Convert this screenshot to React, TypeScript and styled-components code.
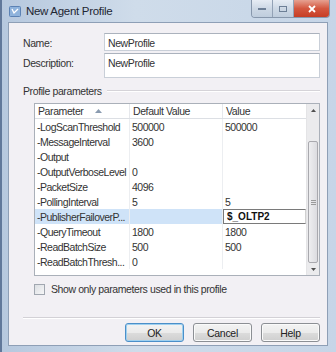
import React from 'react';
import styled, { createGlobalStyle } from 'styled-components';

const GlobalStyle = createGlobalStyle`
  html, body {
    margin: 0;
    padding: 0;
    background: #6f86a2;
  }
  body {
    font-family: "Liberation Sans", Arial, sans-serif;
    font-size: 10.5px;
    color: #333333;
  }
`;

interface Param {
  name: string;
  def: string;
  value: string;
  editing?: boolean;
}

const params: Param[] = [
  { name: '-LogScanThreshold', def: '500000', value: '500000' },
  { name: '-MessageInterval', def: '3600', value: '' },
  { name: '-Output', def: '', value: '' },
  { name: '-OutputVerboseLevel', def: '0', value: '' },
  { name: '-PacketSize', def: '4096', value: '' },
  { name: '-PollingInterval', def: '5', value: '5' },
  { name: '-PublisherFailoverP...', def: '', value: '$_OLTP2', editing: true },
  { name: '-QueryTimeout', def: '1800', value: '1800' },
  { name: '-ReadBatchSize', def: '500', value: '500' },
  { name: '-ReadBatchThresh...', def: '0', value: '' },
];

const App = () => {
  return (
    <>
      <GlobalStyle />
      <Window>
        <TitleBar>
          <AppIcon>
            <svg width="12" height="11" viewBox="0 0 12 11">
              <rect x="0.5" y="0.5" width="11" height="10" rx="1" fill="#8fb3dc" stroke="#5c82b4" />
              <path d="M3 3 L5 7 L9 3" stroke="#ffffff" strokeWidth="1.3" fill="none" />
            </svg>
          </AppIcon>
          <Title>New Agent Profile</Title>
          <Controls>
            <CtlButton>
              <svg width="10" height="6" viewBox="0 0 10 6">
                <rect x="1" y="2" width="8" height="2" fill="#6d7f96" />
              </svg>
            </CtlButton>
            <CtlButton>
              <svg width="10" height="8" viewBox="0 0 10 8">
                <rect x="1.5" y="1.5" width="7" height="5" fill="none" stroke="#6d7f96" />
                <rect x="3" y="3" width="4" height="2" fill="#cbd6e3" />
              </svg>
            </CtlButton>
            <CloseButton>
              <svg width="10" height="8" viewBox="0 0 10 8">
                <path d="M2 1 L8 7 M8 1 L2 7" stroke="#ffffff" strokeWidth="1.8" />
              </svg>
            </CloseButton>
          </Controls>
        </TitleBar>
        <Client>
          <FieldRow>
            <Label>Name:</Label>
            <TextBox $height={18}>NewProfile</TextBox>
          </FieldRow>
          <FieldRow>
            <Label>Description:</Label>
            <TextBox $height={25}>NewProfile</TextBox>
          </FieldRow>
          <GroupHeader>
            <span>Profile parameters</span>
            <GroupLine />
          </GroupHeader>
          <Grid>
            <GridBody>
              <HeaderRow>
                <HeadCell>
                  Parameter
                  <SortArrow>
                    <svg width="7" height="4" viewBox="0 0 7 4">
                      <path d="M0 4 L3.5 0 L7 4 Z" fill="#8a9bb0" />
                    </svg>
                  </SortArrow>
                </HeadCell>
                <HeadCell>Default Value</HeadCell>
                <HeadCell>Value</HeadCell>
              </HeaderRow>
              {params.map((p) => (
                <Row key={p.name}>
                  <Cell $selected={p.editing}>{p.name}</Cell>
                  <Cell $selected={p.editing}>{p.def}</Cell>
                  {p.editing ? <EditCell>{p.value}</EditCell> : <Cell>{p.value}</Cell>}
                </Row>
              ))}
            </GridBody>
            <ScrollBar>
              <ScrollArrow>
                <svg width="5" height="3" viewBox="0 0 5 3">
                  <path d="M0 3 L2.5 0 L5 3 Z" fill="#4f4f4f" />
                </svg>
              </ScrollArrow>
              <Track>
                <Thumb>
                  <svg width="5" height="5" viewBox="0 0 5 5">
                    <path d="M0 0.5 H5 M0 2.5 H5 M0 4.5 H5" stroke="#9a9a9a" />
                  </svg>
                </Thumb>
              </Track>
              <ScrollArrow>
                <svg width="5" height="3" viewBox="0 0 5 3">
                  <path d="M0 0 L2.5 3 L5 0 Z" fill="#4f4f4f" />
                </svg>
              </ScrollArrow>
            </ScrollBar>
          </Grid>
          <CheckRow>
            <CheckBox />
            <span>Show only parameters used in this profile</span>
          </CheckRow>
          <Separator />
          <ButtonRow>
            <DialogButton $default>OK</DialogButton>
            <DialogButton>Cancel</DialogButton>
            <DialogButton>Help</DialogButton>
          </ButtonRow>
        </Client>
      </Window>
    </>
  );
};

export default App;

const Window = styled.div`
  width: 336px;
  height: 352px;
  box-sizing: border-box;
  display: flex;
  flex-direction: column;
  background: linear-gradient(90deg, #b6c8de 0%, #cfdcea 40%, #c6d5e7 100%);
  border-left: 2px solid #61789a;
  overflow: hidden;
`;

const TitleBar = styled.div`
  height: 22px;
  flex: none;
  display: flex;
  align-items: flex-start;
  padding-left: 7px;
`;

const AppIcon = styled.div`
  margin-top: 6px;
  width: 12px;
  height: 11px;
  display: flex;
`;

const Title = styled.div`
  margin-top: 5px;
  margin-left: 5px;
  font-size: 11.5px;
  color: #1e2733;
  letter-spacing: -0.3px;
`;

const Controls = styled.div`
  margin-left: auto;
  margin-right: 6px;
  display: flex;
  height: 17px;
  border: 1px solid #8797ac;
  border-top: none;
  border-radius: 0 0 4px 4px;
  overflow: hidden;
`;

const CtlButton = styled.div`
  width: 20px;
  display: flex;
  align-items: center;
  justify-content: center;
  background: linear-gradient(#e6ecf4, #cdd8e5 50%, #bfcddd);
  border-right: 1px solid #93a2b6;
`;

const CloseButton = styled(CtlButton)`
  width: 35px;
  border-right: none;
  background: linear-gradient(#e6a191, #d4573f 50%, #c63d24);
`;

const Client = styled.div`
  flex: 1;
  margin: 0 8px 6px 6px;
  background: #f2f0f4;
  border: 1px solid #8e9fb6;
  display: flex;
  flex-direction: column;
  padding: 10px 7px 0 14px;
`;

const FieldRow = styled.div`
  display: flex;
  align-items: flex-start;
  margin-bottom: 2px;
`;

const Label = styled.div`
  width: 81px;
  padding-top: 4px;
  letter-spacing: -0.4px;
`;

const TextBox = styled.div<{ $height: number }>`
  flex: 1;
  height: ${(p) => p.$height}px;
  box-sizing: border-box;
  background: #ffffff;
  border: 1px solid #c9cfd8;
  border-top-color: #abb2bd;
  padding: 3px 3px;
  letter-spacing: -0.4px;
`;

const GroupHeader = styled.div`
  display: flex;
  align-items: center;
  margin-top: 5px;
  letter-spacing: -0.4px;
`;

const GroupLine = styled.div`
  flex: 1;
  height: 0;
  border-top: 1px solid #d5d3d8;
  border-bottom: 1px solid #ffffff;
  margin-left: 5px;
`;

const Grid = styled.div`
  margin: 6px 0 0 11px;
  height: 173px;
  box-sizing: border-box;
  display: flex;
  background: #ffffff;
  border: 1px solid #aab0b9;
`;

const GridBody = styled.div`
  flex: 1;
  min-width: 0;
  display: flex;
  flex-direction: column;
`;

const ColumnRow = styled.div`
  display: grid;
  grid-template-columns: 95px 93px 1fr;
  height: 15px;
`;

const HeaderRow = styled(ColumnRow)`
  height: 14px;
  border-bottom: 1px solid #dcdfe4;
`;

const Row = styled(ColumnRow)``;

const HeadCell = styled.div`
  display: flex;
  align-items: center;
  padding-left: 3px;
  border-right: 1px solid #e6e8ec;
  letter-spacing: -0.4px;
  color: #333;
  &:last-child {
    border-right: none;
  }
`;

const SortArrow = styled.span`
  margin-left: 12px;
  display: flex;
`;

const Cell = styled.div<{ $selected?: boolean }>`
  display: flex;
  align-items: center;
  padding-left: 2px;
  white-space: nowrap;
  overflow: hidden;
  letter-spacing: -0.5px;
  background: ${(p) => (p.$selected ? '#cfe3f8' : '#ffffff')};
  border-right: 1px solid #eceef1;
  &:last-child {
    border-right: none;
  }
`;

const EditCell = styled.div`
  display: flex;
  align-items: center;
  padding-left: 3px;
  background: #ffffff;
  border: 1px solid #7a7a7a;
  border-right-color: #d0d0d0;
  font-weight: bold;
  font-size: 10px;
  color: #111;
  box-sizing: border-box;
`;

const ScrollBar = styled.div`
  width: 12px;
  display: flex;
  flex-direction: column;
  background: #ebebed;
  border-left: 1px solid #e4e4e6;
`;

const ScrollArrow = styled.div`
  height: 12px;
  display: flex;
  align-items: center;
  justify-content: center;
`;

const Track = styled.div`
  flex: 1;
  display: flex;
  flex-direction: column;
  padding-top: 25px;
`;

const Thumb = styled.div`
  flex: 1;
  margin: 0 1px;
  border: 1px solid #a9a9ae;
  border-radius: 2px;
  background: linear-gradient(90deg, #eeeef0, #dcdce0);
  display: flex;
  align-items: center;
  justify-content: center;
`;

const CheckRow = styled.div`
  display: flex;
  align-items: center;
  margin: 7px 0 0 11px;
  letter-spacing: -0.4px;
`;

const CheckBox = styled.div`
  width: 11px;
  height: 11px;
  box-sizing: border-box;
  border: 1px solid #a1a7b0;
  background: linear-gradient(135deg, #dcdfe3, #f6f6f7);
  margin-right: 6px;
`;

const Separator = styled.div`
  margin-top: 22px;
  border-top: 1px solid #d3d1d6;
  border-bottom: 1px solid #ffffff;
`;

const ButtonRow = styled.div`
  display: flex;
  justify-content: flex-end;
  gap: 9px;
  margin-top: 4px;
`;

const DialogButton = styled.div<{ $default?: boolean }>`
  width: 59px;
  height: 19px;
  box-sizing: border-box;
  display: flex;
  align-items: center;
  justify-content: center;
  border: 1px solid ${(p) => (p.$default ? '#4b8fc9' : '#8c8f94')};
  box-shadow: ${(p) => (p.$default ? 'inset 0 0 0 1px #9fd0ef' : 'inset 0 0 0 1px #fafafa')};
  border-radius: 3px;
  background: linear-gradient(#f3f3f3 0%, #ebebeb 50%, #dcdcdc 51%, #cfcfcf 100%);
  color: #222;
  letter-spacing: -0.3px;
`;
